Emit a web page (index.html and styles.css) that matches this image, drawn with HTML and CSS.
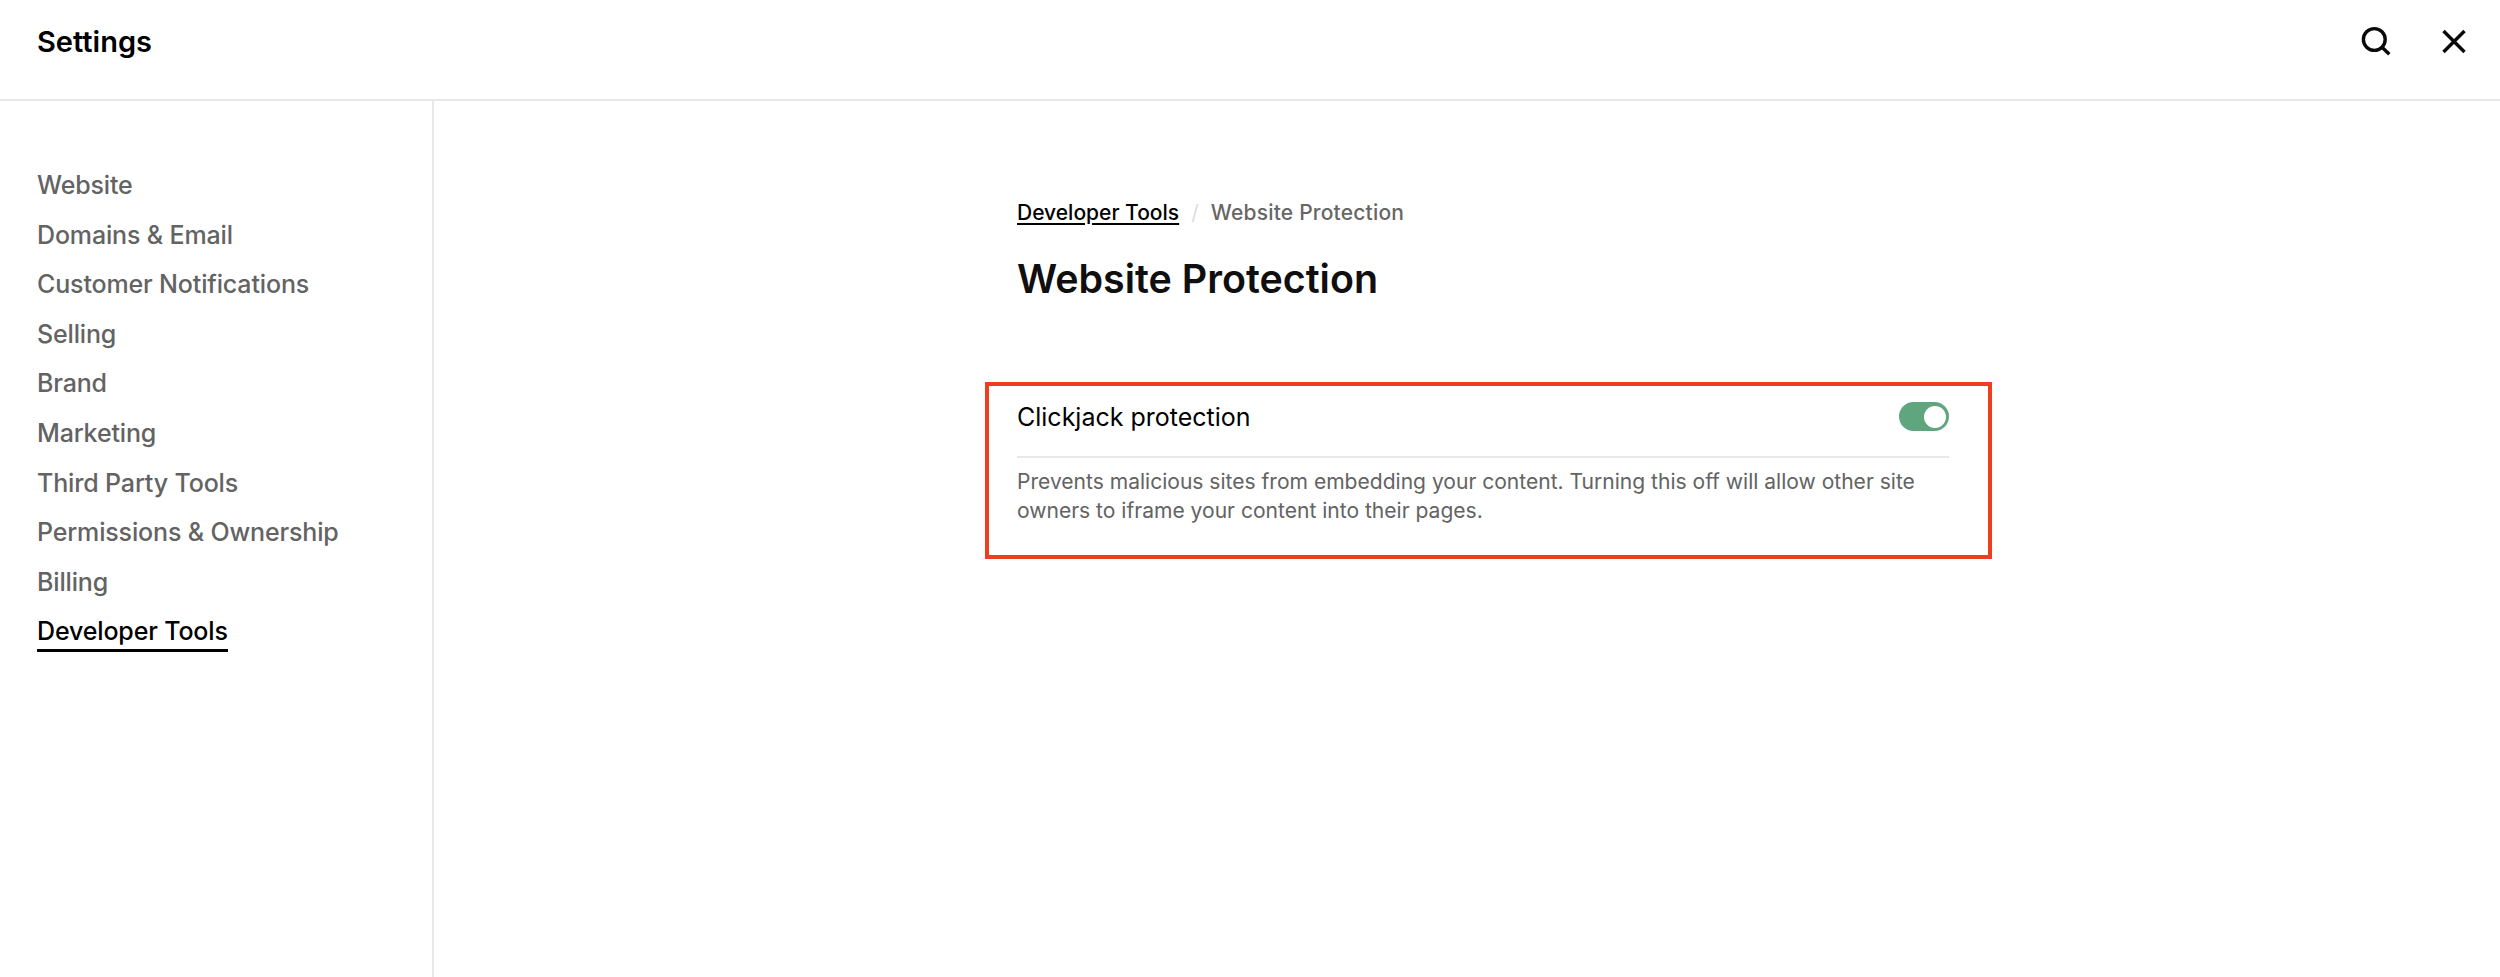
FILE: index.html
```html
<!DOCTYPE html>
<html lang="en">
<head>
  <meta charset="UTF-8">
  <title>Settings</title>
  <link rel="stylesheet" href="styles.css">
</head>
<body>
  <header class="topbar">
    <div class="topbar-title">Settings</div>
    <div class="topbar-actions">
      <svg class="icon" viewBox="0 0 32 32" width="32" height="32" aria-label="Search">
        <circle cx="14.3" cy="14.5" r="10.9"/>
        <path d="M22.3 22.5l7 6.8"/>
      </svg>
      <svg class="icon" viewBox="0 0 32 32" width="32" height="32" aria-label="Close">
        <path d="M5.5 6l21 21M26.5 6l-21 21"/>
      </svg>
    </div>
  </header>

  <div class="layout">
    <nav class="sidebar">
      <a class="nav-link">Website</a>
      <a class="nav-link">Domains &amp; Email</a>
      <a class="nav-link">Customer Notifications</a>
      <a class="nav-link">Selling</a>
      <a class="nav-link">Brand</a>
      <a class="nav-link">Marketing</a>
      <a class="nav-link">Third Party Tools</a>
      <a class="nav-link">Permissions &amp; Ownership</a>
      <a class="nav-link">Billing</a>
      <a class="nav-link active">Developer Tools</a>
    </nav>

    <main class="content">
      <div class="breadcrumb">
        <a class="crumb-link">Developer Tools</a>
        <span class="crumb-sep">/</span>
        <span class="crumb-current">Website Protection</span>
      </div>
      <h1 class="page-title">Website Protection</h1>

      <section class="option-card">
        <div class="option-row">
          <span class="option-label">Clickjack protection</span>
          <span class="toggle"><span class="toggle-knob"></span></span>
        </div>
        <p class="option-desc">Prevents malicious sites from embedding your content. Turning this off will allow other site owners to iframe your content into their pages.</p>
      </section>
    </main>
  </div>
</body>
</html>
```

FILE: styles.css
```css
* { box-sizing: border-box; }
html, body { height: 100%; }
body {
  margin: 0;
  display: flex;
  flex-direction: column;
  background: #fff;
  color: #000;
  font-family: Inter, "Liberation Sans", sans-serif;
}

.topbar {
  height: 101px;
  flex: none;
  display: flex;
  align-items: flex-start;
  justify-content: space-between;
  padding: 24px 30px 0 37px;
  border-bottom: 2px solid #e8e8e8;
}
.topbar-title { font-size: 29px; font-weight: 600; line-height: 36px; }
.topbar-actions { display: flex; gap: 46px; padding-top: 1px; }
.icon { fill: none; stroke: #0a0a0a; stroke-width: 3.4; }

.layout { flex: 1; display: flex; }

.sidebar {
  width: 434px;
  flex: none;
  display: flex;
  flex-direction: column;
  align-items: flex-start;
  gap: 17.6px;
  padding: 68px 0 0 37px;
  border-right: 2px solid #e8e8e8;
}
.nav-link { font-size: 25px; font-weight: 500; line-height: 32px; letter-spacing: -0.15px; color: #636363; }
.nav-link.active { color: #000; border-bottom: 3.5px solid #000; height: 37px; }

.content { flex: 1; padding: 98px 0 0 583px; }

.breadcrumb { display: flex; align-items: center; font-size: 21px; font-weight: 500; line-height: 28px; color: #666; }
.crumb-link { color: #000; text-decoration: underline; text-underline-offset: 3px; }
.crumb-sep { margin: 0 12px; color: #ddd; font-weight: 400; }
.crumb-current { letter-spacing: 0.2px; }

.page-title { margin: 26px 0 0; font-size: 39.4px; font-weight: 600; line-height: 52px; color: #0f0f0f; }

.option-card {
  width: 1007px;
  height: 177px;
  margin: 77px 0 0 -32px;
  padding: 10px 39px 0 28px;
  border: 4px solid #ee3e20;
}
.option-row {
  display: flex;
  align-items: center;
  justify-content: space-between;
  height: 62px;
  padding-bottom: 19px;
  border-bottom: 2px solid #e8e8e8;
}
.option-label { font-size: 25px; line-height: 32px; }
.toggle {
  width: 50px;
  height: 29px;
  display: flex;
  align-items: center;
  justify-content: flex-end;
  padding-right: 3px;
  border-radius: 15px;
  background: #5fa67e;
}
.toggle-knob { width: 22px; height: 22px; border-radius: 50%; background: #fff; }
.option-desc { margin: 9px 0 0; font-size: 21.05px; line-height: 29px; color: #636363; }
```
